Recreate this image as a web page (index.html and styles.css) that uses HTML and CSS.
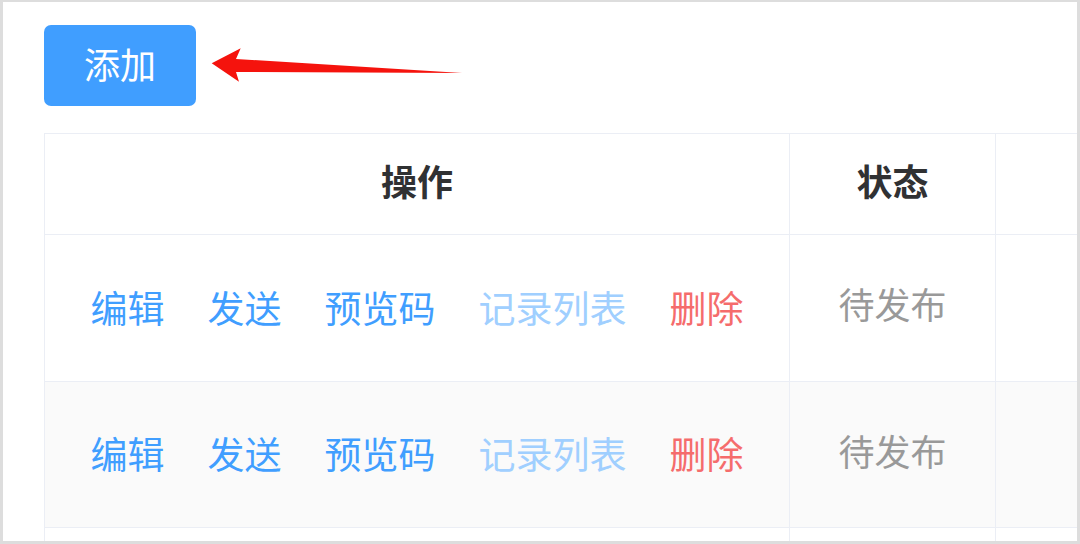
FILE: index.html
```html
<!DOCTYPE html>
<html lang="zh-CN">
<head>
<meta charset="utf-8">
<title>表格</title>
<link rel="stylesheet" href="styles.css">
</head>
<body>
<div class="frame">
  <div class="toolbar">
    <button class="btn-primary">添加</button>
  </div>
  <div class="table">
    <div class="cell head">操作</div>
    <div class="cell head">状态</div>
    <div class="cell head"></div>

    <div class="cell ops">
      <span class="link">编辑</span>
      <span class="link">发送</span>
      <span class="link">预览码</span>
      <span class="link disabled">记录列表</span>
      <span class="link danger">删除</span>
    </div>
    <div class="cell status">待发布</div>
    <div class="cell"></div>

    <div class="cell ops striped">
      <span class="link">编辑</span>
      <span class="link">发送</span>
      <span class="link">预览码</span>
      <span class="link disabled">记录列表</span>
      <span class="link danger">删除</span>
    </div>
    <div class="cell status striped">待发布</div>
    <div class="cell striped"></div>

    <div class="cell last"></div>
    <div class="cell last"></div>
    <div class="cell last"></div>
  </div>
  <svg class="arrow" width="260" height="40" viewBox="0 0 260 40">
    <path d="M1.7 15.3 L30.7 0.3 L26 11 L252 25 L26 24 L29 33.7 Z" fill="#f5130d"/>
  </svg>
</div>
</body>
</html>
```

FILE: styles.css
```css
html, body {
  margin: 0;
  padding: 0;
  background: #ffffff;
}

body {
  font-family: "Noto Sans CJK SC", "Noto Sans", sans-serif;
}

.frame {
  position: relative;
  width: 1080px;
  height: 544px;
  box-sizing: border-box;
  border-style: solid;
  border-color: #dddddd;
  border-width: 2px 3px 3px 3px;
  overflow: hidden;
  background: #ffffff;
}

.toolbar {
  padding: 23px 0 0 41px;
  display: flex;
}

.btn-primary {
  width: 152px;
  height: 81px;
  border: none;
  border-radius: 7px;
  background: #409eff;
  color: #ffffff;
  font-family: "Noto Sans CJK SC", sans-serif;
  font-size: 36px;
  line-height: 1;
  padding: 0 0 6px 0;
  cursor: pointer;
}

.table {
  margin: 27px 0 0 41px;
  width: 1100px;
  display: grid;
  grid-template-columns: 745px 206px 1fr;
  grid-template-rows: 101px 147px 146px 40px;
  border-top: 1px solid #ebeef5;
  border-left: 1px solid #ebeef5;
}

.cell {
  border-right: 1px solid #ebeef5;
  border-bottom: 1px solid #ebeef5;
  display: flex;
  align-items: center;
  justify-content: center;
  font-size: 36px;
  line-height: 1;
}

.head {
  font-weight: bold;
  color: #303133;
  padding-bottom: 8px;
}

.striped {
  background: #fafafa;
}

.ops {
  gap: 43px;
  font-size: 37px;
  padding-bottom: 2px;
}

.status {
  color: #999999;
  padding-bottom: 10px;
}

.link {
  color: #409eff;
}

.link.disabled {
  color: #a0cfff;
}

.link.danger {
  color: #f56c6c;
}

.arrow {
  position: absolute;
  left: 207px;
  top: 46px;
}
```
